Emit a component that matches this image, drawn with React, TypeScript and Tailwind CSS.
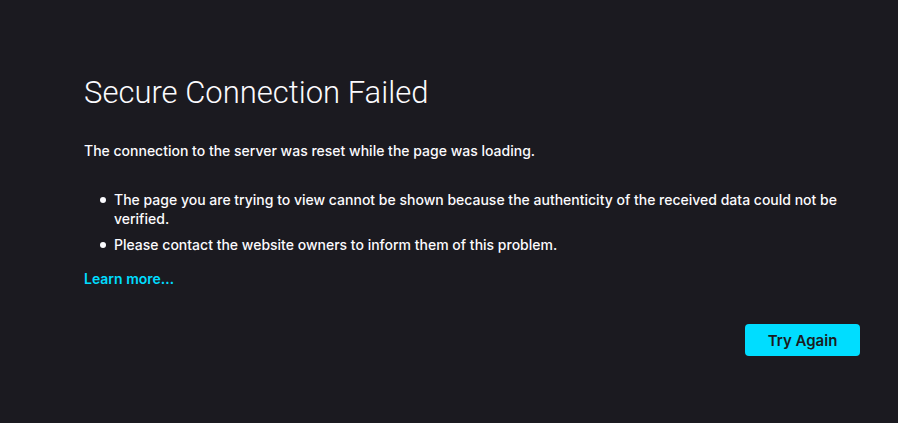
const reasons = [
  "The page you are trying to view cannot be shown because the authenticity of the received data could not be verified.",
  "Please contact the website owners to inform them of this problem.",
];

export default function App() {
  return (
    <main className="min-h-screen bg-[#1b1a20] pt-[72px] pr-[38px] pb-16 pl-[84px] font-['Inter','Liberation_Sans',sans-serif] text-[14px] leading-[19px] font-medium text-[#fbfbfe]">
      <h1 className="font-['Roboto','Liberation_Sans',sans-serif] text-[31px] leading-[41px] font-light">
        Secure Connection Failed
      </h1>
      <p className="mt-7">The connection to the server was reset while the page was loading.</p>
      <ul className="mt-[30px] space-y-[7px] pl-4">
        {reasons.map((reason) => (
          <li
            key={reason}
            className="flex gap-2 before:mt-[7px] before:size-[6px] before:shrink-0 before:rounded-full before:bg-[#fbfbfe]"
          >
            {reason}
          </li>
        ))}
      </ul>
      <p className="mt-[15px]">
        <a href="#learn-more" className="font-semibold text-[#00ddff]">Learn more…</a>
      </p>
      <div className="mt-9 flex justify-end">
        <button
          type="button"
          className="h-8 min-w-[115px] rounded bg-[#00ddff] px-4 text-[15px] font-semibold text-[#1b1a20]"
        >
          Try Again
        </button>
      </div>
    </main>
  );
}
